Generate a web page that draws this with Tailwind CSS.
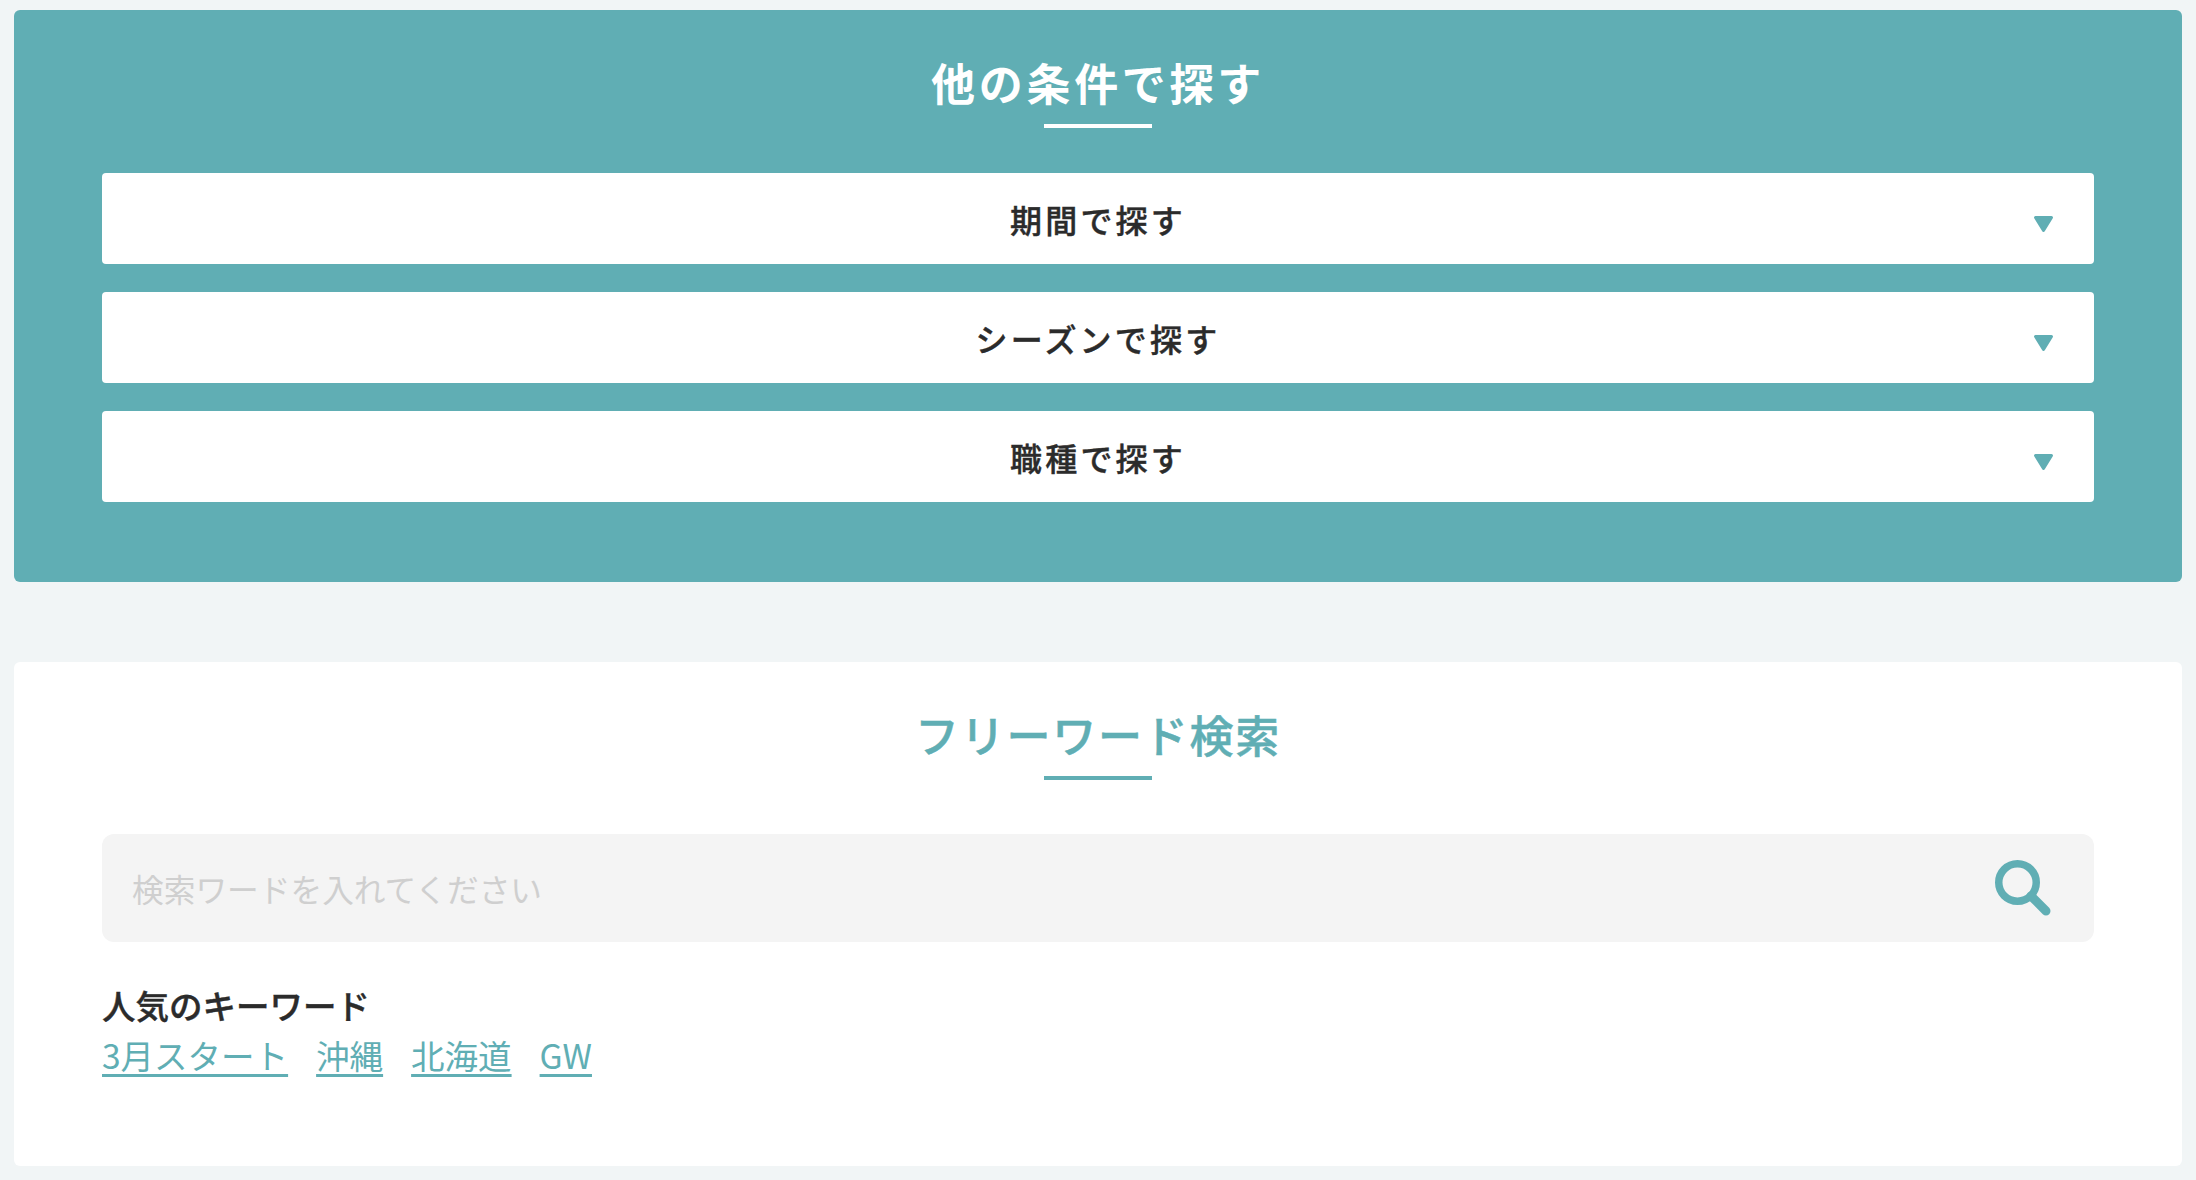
<!DOCTYPE html>
<html lang="ja">
<head>
<meta charset="utf-8">
<script src="https://cdn.jsdelivr.net/npm/@tailwindcss/browser@4"></script>
</head>
<body class="bg-[#f1f5f6] font-['Noto_Sans_CJK_JP','Noto_Sans',sans-serif] text-[#2b2b2b] h-[1180px] overflow-hidden">
<div class="pt-[10px] px-[14px]">
  <section class="bg-[#60aeb4] rounded-[6px] h-[572px] px-[88px] pt-[47px]">
    <h2 class="flex flex-col items-center text-white text-[44px] font-bold leading-[50px] tracking-[0.085em]">
      <span>他の条件で探す</span>
      <span class="block w-[108px] h-[4px] bg-white mt-[17px]"></span>
    </h2>
    <div class="mt-[45px] flex flex-col gap-[28px]">
      <div class="relative h-[91px] bg-white rounded-[4px] flex items-center justify-center text-[32px] font-medium [-webkit-text-stroke:0.4px] tracking-[0.1em] text-[#2b2b2b]">
        <span>期間で探す</span>
        <svg class="absolute left-[1931px] top-[43px]" width="20" height="17" viewBox="0 0 20 17"><path d="M2.500 1.500h16L10.500 14.500z" fill="#60aeb4" stroke="#60aeb4" stroke-width="3" stroke-linejoin="round"/></svg>
      </div>
      <div class="relative h-[91px] bg-white rounded-[4px] flex items-center justify-center text-[32px] font-medium [-webkit-text-stroke:0.4px] tracking-[0.1em] text-[#2b2b2b]">
        <span>シーズンで探す</span>
        <svg class="absolute left-[1931px] top-[43px]" width="20" height="17" viewBox="0 0 20 17"><path d="M2.500 1.500h16L10.500 14.500z" fill="#60aeb4" stroke="#60aeb4" stroke-width="3" stroke-linejoin="round"/></svg>
      </div>
      <div class="relative h-[91px] bg-white rounded-[4px] flex items-center justify-center text-[32px] font-medium [-webkit-text-stroke:0.4px] tracking-[0.1em] text-[#2b2b2b]">
        <span>職種で探す</span>
        <svg class="absolute left-[1931px] top-[43px]" width="20" height="17" viewBox="0 0 20 17"><path d="M2.500 1.500h16L10.500 14.500z" fill="#60aeb4" stroke="#60aeb4" stroke-width="3" stroke-linejoin="round"/></svg>
      </div>
    </div>
  </section>
  <section class="bg-white rounded-[6px] h-[504px] mt-[80px] px-[88px] pt-[47px]">
    <h2 class="flex flex-col items-center text-[#60aeb4] text-[44px] font-medium [-webkit-text-stroke:0.5px] leading-[50px] tracking-[0.04em]">
      <span>フリーワード検索</span>
      <span class="block w-[108px] h-[4px] bg-[#60aeb4] mt-[17px]"></span>
    </h2>
    <div class="relative mt-[54px] h-[108px] bg-[#f4f4f4] rounded-[12px] flex items-center pl-[30px] text-[31.7px] text-[#cfcfcf]">
      <span class="mt-[2px]">検索ワードを入れてください</span>
      <svg class="absolute left-[1893px] top-[26px]" width="56" height="56" viewBox="0 0 56 56" fill="none" stroke="#60aeb4" stroke-linecap="round"><circle cx="22.500" cy="22.500" r="18.750" stroke-width="7.500"/><path d="M36 36l15 15" stroke-width="9"/></svg>
    </div>
    <p class="mt-[38px] text-[33.5px] font-medium [-webkit-text-stroke:0.4px] leading-[50px]">人気のキーワード</p>
    <div class="flex gap-[28px] text-[33.5px] leading-[50px] text-[#60aeb4]">
      <a class="underline underline-offset-[5px] decoration-[3px]">3月スタート</a>
      <a class="underline underline-offset-[5px] decoration-[3px]">沖縄</a>
      <a class="underline underline-offset-[5px] decoration-[3px]">北海道</a>
      <a class="underline underline-offset-[5px] decoration-[3px]">GW</a>
    </div>
  </section>
</div>
</body>
</html>
